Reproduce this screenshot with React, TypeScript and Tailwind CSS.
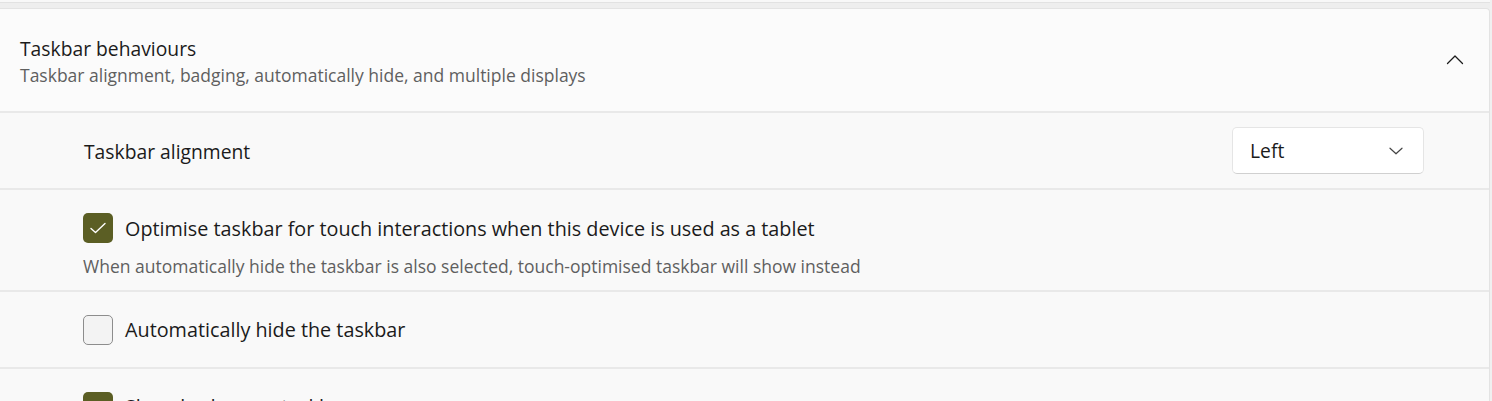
import React from "react";

const font = { fontFamily: '"Segoe UI", "Open Sans", "Noto Sans", sans-serif' };

function Check({ checked }: { checked: boolean }) {
  if (checked) {
    return (
      <div className="w-[30px] h-[30px] rounded-[5px] bg-[#5b5e24] flex items-center justify-center shrink-0">
        <svg width="18" height="18" viewBox="0 0 18 18" fill="none">
          <path d="M2 9.5 L6.5 13.5 L16 4.5" stroke="#ffffff" strokeWidth="1.4" strokeLinecap="round" strokeLinejoin="round" />
        </svg>
      </div>
    );
  }
  return <div className="w-[30px] h-[30px] rounded-[5px] bg-[#f3f3f3] border border-[#8d8d8d] shrink-0" />;
}

function Sep() {
  return <div className="h-[2px] bg-[#e9e9e9]" />;
}

export default function App() {
  return (
    <div className="w-[1492px] h-[401px] overflow-hidden bg-[#f0f0f0] pr-[2px]" style={font}>
      <div className="h-[2px] bg-[#f8f8f8]" />
      <div className="h-[1px] bg-[#e2e2e2]" />
      <div className="h-[5px] bg-[#eeeeee]" />
      <div className="bg-[#fbfbfb] border-t border-r border-[#e3e3e3] rounded-tr-[4px]">
        <div className="h-[102px] flex items-center justify-between pl-[20px] pr-[25px]">
          <div className="flex flex-col pt-[3px]">
            <div className="text-[19.3px] leading-[26px] text-[#1b1b1b]">Taskbar behaviours</div>
            <div className="mt-[1px] text-[17.5px] leading-[24px] text-[#5f5f5f]">
              Taskbar alignment, badging, automatically hide, and multiple displays
            </div>
          </div>
          <svg width="18" height="12" viewBox="0 0 18 12" fill="none">
            <path d="M1.5 9.5 L9 2 L16.5 9.5" stroke="#1b1b1b" strokeWidth="1.3" strokeLinecap="round" strokeLinejoin="round" />
          </svg>
        </div>
        <Sep />
        <div className="h-[75px] flex items-center justify-between pl-[84px] pr-[65px] bg-[#f9f9f9]">
          <div className="text-[19.3px] text-[#1b1b1b] pt-[3px]">Taskbar alignment</div>
          <div className="w-[192px] h-[47px] rounded-[5px] bg-[#ffffff] border border-[#e5e5e5] border-b-[#d0d0d0] flex items-center justify-between pl-[17px] pr-[20px]">
            <span className="text-[19.3px] text-[#1b1b1b] pt-[2px]">Left</span>
            <svg width="14" height="8" viewBox="0 0 14 8" fill="none">
              <path d="M1 1.2 L7 6.8 L13 1.2" stroke="#444444" strokeWidth="1.2" strokeLinecap="round" strokeLinejoin="round" />
            </svg>
          </div>
        </div>
        <Sep />
        <div className="h-[100px] flex flex-col pl-[83px] pt-[23px] bg-[#f9f9f9]">
          <div className="flex items-center gap-[12px]">
            <Check checked />
            <span className="text-[19.8px] text-[#1b1b1b] pt-[1px]">
              Optimise taskbar for touch interactions when this device is used as a tablet
            </span>
          </div>
          <div className="mt-[10px] text-[17.5px] leading-[24px] text-[#5f5f5f]">
            When automatically hide the taskbar is also selected, touch-optimised taskbar will show instead
          </div>
        </div>
        <Sep />
        <div className="h-[75px] flex items-center pl-[83px] gap-[12px] bg-[#f9f9f9]">
          <Check checked={false} />
          <span className="text-[19.8px] text-[#1b1b1b]">Automatically hide the taskbar</span>
        </div>
        <Sep />
        <div className="h-[75px] flex items-center pl-[83px] gap-[12px] bg-[#f9f9f9]">
          <Check checked />
          <span className="text-[19.8px] text-[#1b1b1b]">Show badges on taskbar apps</span>
        </div>
      </div>
    </div>
  );
}
